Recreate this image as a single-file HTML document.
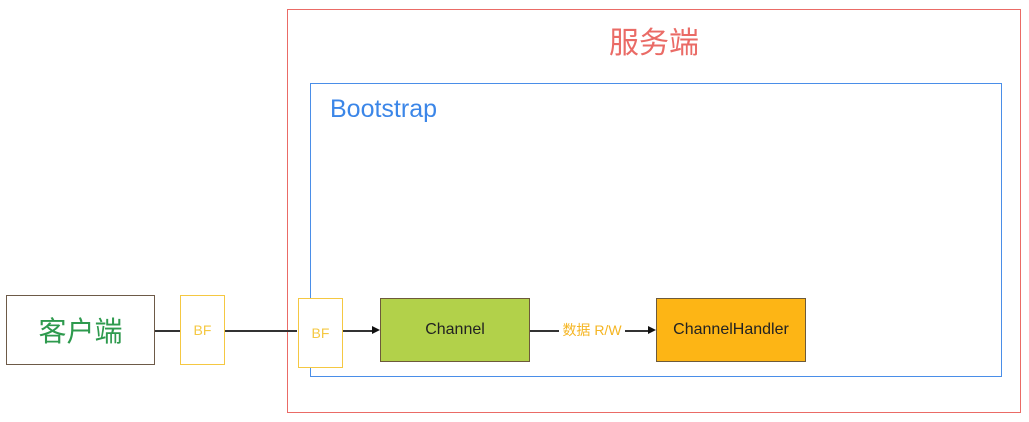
<!DOCTYPE html>
<html><head><meta charset="utf-8"><style>
body{margin:0;width:1029px;height:422px;background:#fff;position:relative;overflow:hidden;font-family:"Liberation Sans","Noto Sans CJK SC",sans-serif}
.a{position:absolute;box-sizing:border-box}
.t{display:flex;align-items:center;justify-content:center}
</style></head><body>
<div class="a" style="left:287px;top:9px;width:734px;height:404px;border:1px solid #ea6b66"></div>
<div class="a t" style="left:580px;top:18px;width:148px;height:44px;color:#ea6b66;font-size:30px">服务端</div>
<div class="a" style="left:310px;top:83px;width:692px;height:294px;border:1px solid #4a8ee8"></div>
<div class="a" style="left:330px;top:95px;color:#3b86e8;font-size:25px">Bootstrap</div>
<div class="a t" style="left:6px;top:295px;width:149px;height:70px;border:1.5px solid #6d5a48;color:#2e9a4e;font-size:28px">客户端</div>
<div class="a" style="left:155px;top:330px;width:142px;height:1.5px;background:#333"></div>
<div class="a t" style="left:180px;top:295px;width:45px;height:70px;border:1px solid #f5c842;background:#fff;color:#f5c842;font-size:14px">BF</div>
<div class="a t" style="left:298px;top:298px;width:45px;height:70px;border:1px solid #f5c842;background:#fff;color:#f5c842;font-size:14px">BF</div>
<div class="a" style="left:343px;top:330px;width:30px;height:1.5px;background:#333"></div>
<div class="a" style="left:372px;top:326px;width:0;height:0;border-left:8px solid #111;border-top:4.5px solid transparent;border-bottom:4.5px solid transparent"></div>
<div class="a t" style="left:380px;top:298px;width:150px;height:64px;border:1px solid #6d5a3a;background:#b2d14a;color:#222;font-size:16px">Channel</div>
<div class="a" style="left:530px;top:330px;width:118px;height:1.5px;background:#333"></div>
<div class="a" style="left:648px;top:326px;width:0;height:0;border-left:8px solid #111;border-top:4.5px solid transparent;border-bottom:4.5px solid transparent"></div>
<div class="a t" style="left:559px;top:321px;width:66px;height:18px;background:#fff;color:#f5b522;font-size:14px">数据 R/W</div>
<div class="a t" style="left:656px;top:298px;width:150px;height:64px;border:1px solid #6d5a3a;background:#fdb515;color:#222;font-size:16px">ChannelHandler</div>
</body></html>
